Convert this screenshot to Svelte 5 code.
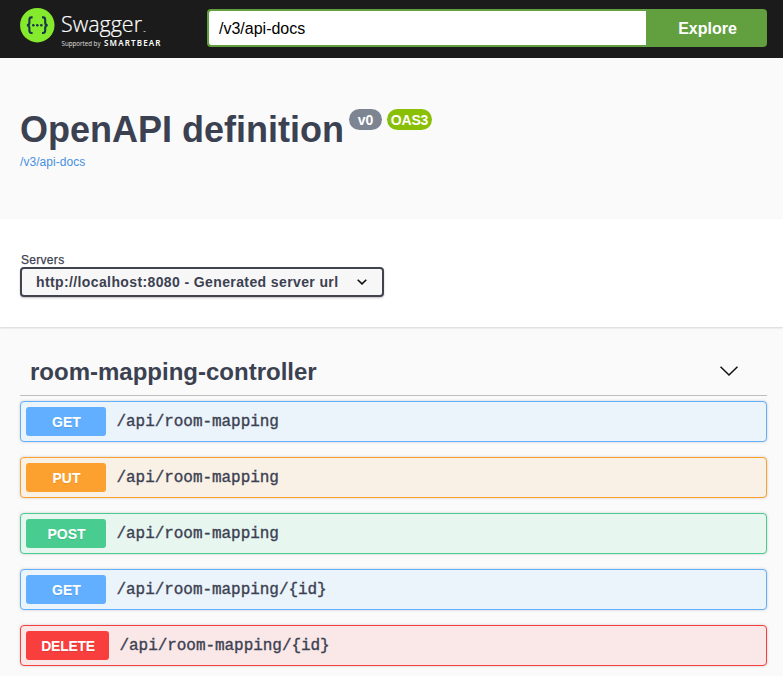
<script>
  const operations = [
    { method: 'get', path: '/api/room-mapping' },
    { method: 'put', path: '/api/room-mapping' },
    { method: 'post', path: '/api/room-mapping' },
    { method: 'get', path: '/api/room-mapping/{id}' },
    { method: 'delete', path: '/api/room-mapping/{id}' }
  ];
  let url = $state('/v3/api-docs');
</script>

<div class="swagger">
  <header class="topbar">
    <svg class="logo" width="187" height="58" viewBox="0 0 187 58" role="img" aria-label="Swagger">
      <circle cx="37.3" cy="25.2" r="17.2" fill="#85ea2d" />
      <g fill="none" stroke="#173647" stroke-width="2.1">
        <path d="M32.600 17.400h-1.100c-1.600 0-2.100 1-2.100 2.400v2.600c0 1.800-.6 2.800-2.500 2.800 1.900 0 2.500 1 2.500 2.800v2.600c0 1.500.5 2.400 2.100 2.400h1.100" />
        <path d="M42 17.400h1.100c1.600 0 2.100 1 2.100 2.400v2.600c0 1.800.6 2.800 2.500 2.800-1.900 0-2.500 1-2.500 2.800v2.600c0 1.500-.5 2.400-2.100 2.400h-1.100" />
      </g>
      <g fill="#173647">
        <circle cx="33.300" cy="25.300" r="1.300" />
        <circle cx="37.300" cy="25.300" r="1.300" />
        <circle cx="41.300" cy="25.300" r="1.300" />
      </g>
      <g fill="#fff" font-family="Open Sans, sans-serif">
        <text x="61" y="32.300" font-size="22" font-weight="300" stroke="#fff" stroke-width=".2" textLength="81" lengthAdjust="spacingAndGlyphs">Swagger</text>
        <rect x="143.500" y="31" width="2" height="1" opacity=".65" />
        <text x="61.500" y="46" font-size="6.300" opacity=".85" textLength="39" lengthAdjust="spacingAndGlyphs">Supported by</text>
        <text x="104" y="46" font-size="8" font-weight="600" font-family="Noto Sans, sans-serif" textLength="56.500">SMARTBEAR</text>
      </g>
    </svg>
    <form class="download" onsubmit={(e) => e.preventDefault()}>
      <input type="text" bind:value={url} aria-label="Definition URL" />
      <button type="submit">Explore</button>
    </form>
  </header>

  <section class="info">
    <h1><span class="title">OpenAPI definition</span><span class="badges"><span class="badge">v0</span><span class="badge oas">OAS3</span></span></h1>
    <a href="#docs">/v3/api-docs</a>
  </section>

  <section class="servers">
    <span class="label">Servers</span>
    <button class="select">
      <span>http://localhost:8080 - Generated server url</span>
      <svg width="10" height="6" viewBox="0 0 10 6"><path d="M.7.7 5 4.900 9.300.7" fill="none" stroke="#111" stroke-width="1.600" /></svg>
    </button>
  </section>

  <main>
    <h2>
      <span>room-mapping-controller</span>
      <svg width="18" height="12" viewBox="0 0 18 12"><path d="M.5.7 9 9 17.500.7" fill="none" stroke="#111" stroke-width="1.600" /></svg>
    </h2>
    {#each operations as op}
      <div class="op {op.method}">
        <span class="method">{op.method.toUpperCase()}</span>
        <span class="path">{op.path}</span>
      </div>
    {/each}
  </main>
</div>

<style>
  :global(body) { margin: 0; background: #fafafa; }
  .swagger {
    height: 676px;
    overflow: hidden;
    background: #fafafa;
    color: #3b4151;
    font-family: "Liberation Sans", Arial, sans-serif;
  }
  .swagger * { box-sizing: border-box; }
  .topbar { display: flex; height: 58px; background: #1b1b1b; }
  .logo { flex: none; }
  .download { display: flex; flex: 1; height: 38px; margin: 9px 16px 0 20px; }
  input {
    flex: 1;
    min-width: 0;
    margin: 0;
    padding: 2px 10px 0;
    border: 2px solid #62a03f;
    border-right: 0;
    border-radius: 4px 0 0 4px;
    background: #fff;
    color: #000;
    font: 16px "Liberation Sans", Arial, sans-serif;
    outline: none;
  }
  .download button {
    width: 121px;
    padding: 2px 0 0 2px;
    border: 0;
    border-radius: 0 4px 4px 0;
    background: #62a03f;
    color: #fff;
    font: bold 16px "Liberation Sans", Arial, sans-serif;
  }
  .info { height: 161px; padding: 50px 20px 0; }
  h1 { display: flex; height: 42px; margin: 0; font-size: 36px; line-height: 44px; white-space: nowrap; }
  .title { width: 324px; }
  .badges { display: flex; gap: 5px; padding: 1px 0 0 5px; }
  .badge {
    width: 33px;
    height: 21px;
    border-radius: 11px;
    background: #7d8492;
    color: #fff;
    font-size: 14px;
    line-height: 22px;
    text-align: center;
  }
  .oas { width: 45px; background: #89bf04; letter-spacing: -.2px; }
  .info a { display: block; margin-top: 5px; color: #4990e2; font-size: 12px; line-height: 14px; letter-spacing: .05px; text-decoration: none; }
  .servers {
    display: flex;
    flex-direction: column;
    align-items: flex-start;
    height: 108px;
    padding: 34px 20px 0;
    background: #fff;
    box-shadow: 0 1px 2px rgba(0, 0, 0, .15);
  }
  .label { padding-left: 1px; font-size: 12px; line-height: 14px; letter-spacing: .3px; -webkit-text-stroke: .25px #3b4151; }
  .select {
    display: flex;
    align-items: center;
    justify-content: space-between;
    width: 364px;
    height: 30px;
    padding: 0 15px 0 14px;
    border: 2px solid #41444e;
    border-radius: 4px;
    background: #f7f7f7;
    box-shadow: 0 1px 2px rgba(0, 0, 0, .25);
    color: #3b4151;
    font: bold 14px "Liberation Sans", Arial, sans-serif;
    letter-spacing: .385px;
    white-space: nowrap;
  }
  main { padding: 21px 16px 0 20px; }
  h2 {
    display: flex;
    align-items: center;
    justify-content: space-between;
    height: 48px;
    margin: 0 0 5px;
    padding: 0 29px 0 10px;
    border-bottom: 1px solid #bcbec1;
    font-size: 24px;
    line-height: 28px;
  }
  .op {
    display: flex;
    align-items: center;
    height: 41px;
    margin-bottom: 15px;
    padding: 0 5px;
    border: 1px solid var(--color);
    border-radius: 4px;
    background: var(--tint);
    box-shadow: 0 0 3px rgba(0, 0, 0, .19);
  }
  .get { --color: #61affe; --tint: #ebf3fb; }
  .put { --color: #fca130; --tint: #faf1e6; }
  .post { --color: #49cc90; --tint: #e8f6f0; }
  .delete { --color: #f93e3e; --tint: #fae7e7; }
  .method {
    width: 80px;
    height: 29px;
    padding-left: 1px;
    border-radius: 3px;
    background: var(--color);
    color: #fff;
    font-size: 14px;
    font-weight: 700;
    line-height: 30px;
    text-align: center;
    text-shadow: 0 1px 0 rgba(0, 0, 0, .1);
  }
  .delete .method { width: 83px; letter-spacing: -.3px; }
  .path {
    padding-left: 10.5px;
    font: 16px "Courier New", "Liberation Mono", monospace;
    letter-spacing: -.05px;
    -webkit-text-stroke: .35px #3b4151;
  }
</style>
